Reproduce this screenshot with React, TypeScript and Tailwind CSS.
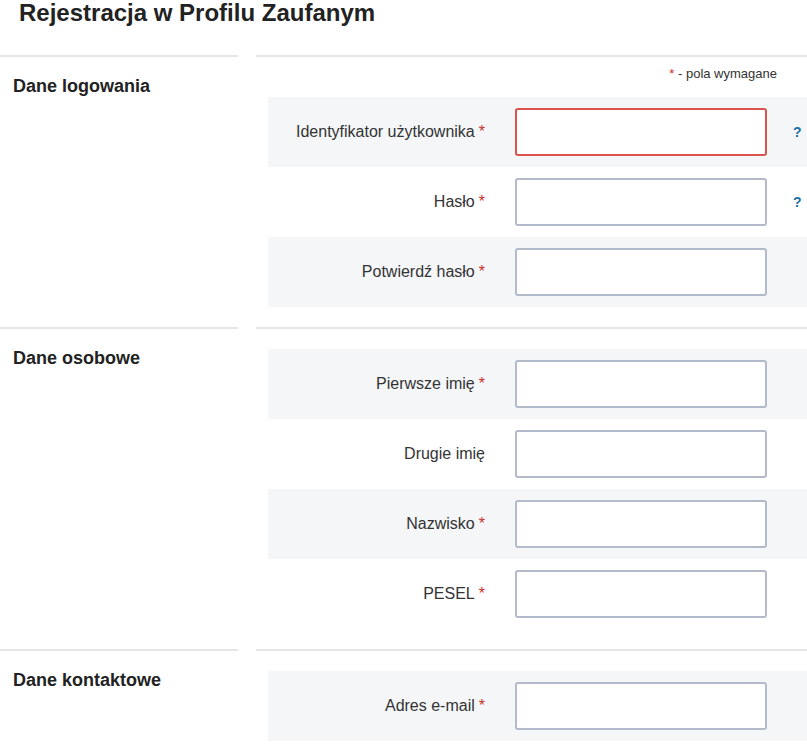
import React from "react";

type Field = { label: string; required: boolean; error?: boolean; help?: boolean };

const sections: { title: string; note?: boolean; fields: Field[] }[] = [
  {
    title: "Dane logowania",
    note: true,
    fields: [
      { label: "Identyfikator użytkownika", required: true, error: true, help: true },
      { label: "Hasło", required: true, help: true },
      { label: "Potwierdź hasło", required: true },
    ],
  },
  {
    title: "Dane osobowe",
    fields: [
      { label: "Pierwsze imię", required: true },
      { label: "Drugie imię", required: false },
      { label: "Nazwisko", required: true },
      { label: "PESEL", required: true },
    ],
  },
  {
    title: "Dane kontaktowe",
    fields: [{ label: "Adres e-mail", required: true }],
  },
];

function Row({ f, i }: { f: Field; i: number }) {
  return (
    <div
      className={
        "flex h-[70px] items-center " + (i % 2 === 0 ? "bg-[#f5f6f8]" : "bg-white")
      }
    >
      <div className="w-[247px] shrink-0 pr-[30px] text-right text-[16px] leading-[20px] text-[#333]">
        {f.label}
        {f.required && <span className="ml-[4px] text-[#c9302c]">*</span>}
      </div>
      <div
        className={
          "h-[48px] w-[252px] shrink-0 rounded-[3px] border-2 bg-white " +
          (f.error ? "border-[#d9534f]" : "border-[#b3bacb]")
        }
      />
      {f.help && (
        <div className="ml-[26px] text-[14px] font-bold leading-[16px] text-[#1b6fa5]">?</div>
      )}
    </div>
  );
}

export default function App() {
  return (
    <div
      className="w-[807px] min-h-[751px] overflow-hidden bg-white text-[#222]"
      style={{ fontFamily: '"Liberation Sans", Arial, sans-serif' }}
    >
      <div className="h-[55px] pl-[19px] pt-[1px]">
        <h1 className="text-[24px] font-bold leading-[24px] text-[#222]">
          Rejestracja w Profilu Zaufanym
        </h1>
      </div>
      {sections.map((s) => (
        <div key={s.title} className="flex gap-[18px] pb-[20px]">
          <div className="w-[238px] shrink-0 border-t-2 border-[#e6e6e6] pl-[13px] pt-[18px]">
            <h2 className="text-[18px] font-bold leading-[22px] text-[#222]">{s.title}</h2>
          </div>
          <div className="flex-1 border-t-2 border-[#e6e6e6] pl-[12px]">
            {s.note ? (
              <div className="pt-[7px] pb-[13px] pr-[30px] text-right text-[13px] leading-[20px] text-[#333]">
                <span className="text-[#c9302c]">*</span> - pola wymagane
              </div>
            ) : (
              <div className="h-[20px]" />
            )}
            {s.fields.map((f, i) => (
              <Row key={f.label} f={f} i={i} />
            ))}
          </div>
        </div>
      ))}
    </div>
  );
}
